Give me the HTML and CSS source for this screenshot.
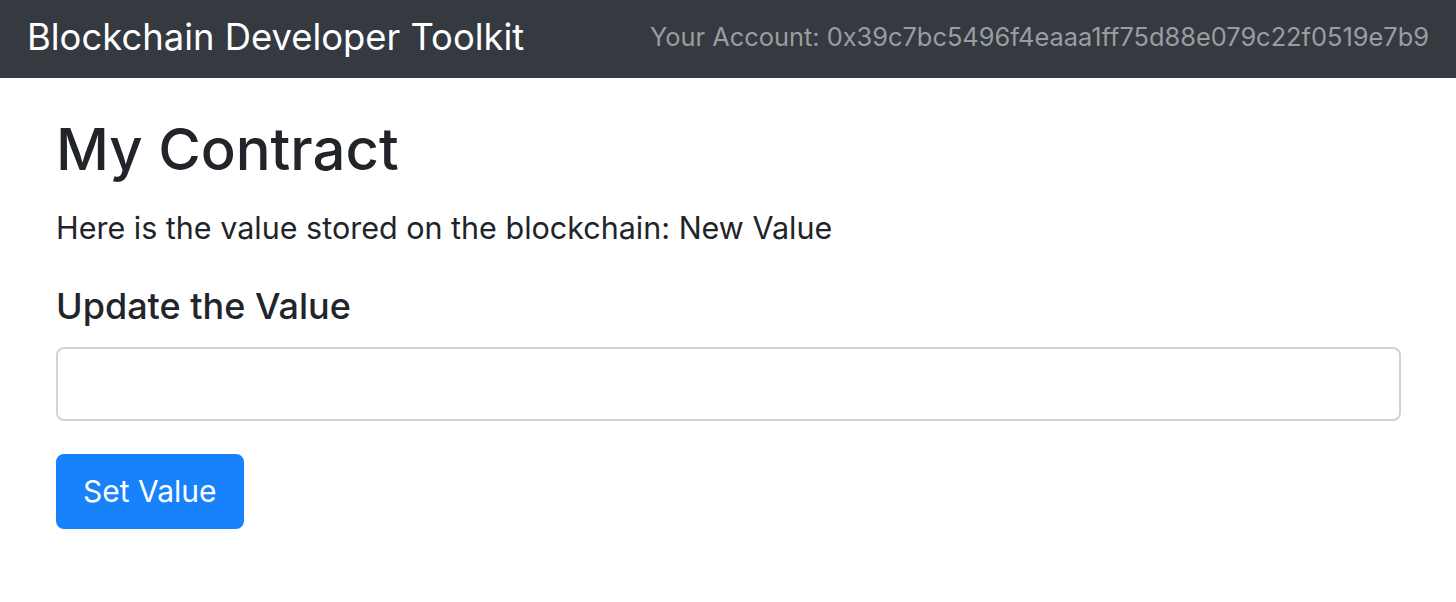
FILE: index.html
```html
<!DOCTYPE html>
<html lang="en">
<head>
<meta charset="utf-8">
<title>Blockchain Developer Toolkit</title>
<link rel="stylesheet" href="styles.css">
</head>
<body>
<nav class="navbar">
  <a class="brand" href="#">Blockchain Developer Toolkit</a>
  <span class="account">Your Account: 0x39c7bc5496f4eaaa1ff75d88e079c22f0519e7b9</span>
</nav>
<main class="content">
  <h1 class="title">My Contract</h1>
  <p class="stored">Here is the value stored on the blockchain: New Value</p>
  <h5 class="subtitle">Update the Value</h5>
  <form class="form">
    <input class="field" type="text">
    <button class="btn" type="button">Set Value</button>
  </form>
</main>
</body>
</html>
```
FILE: styles.css
```css
* { box-sizing: border-box; }
html, body { margin: 0; padding: 0; }
body {
  font-family: Inter, "Noto Sans", "Liberation Sans", sans-serif;
  color: #212529;
  background: #fff;
}
.navbar {
  height: 78px;
  background: #343a40;
  display: flex;
  align-items: center;
  justify-content: space-between;
  padding: 0 27px 4px 27px;
}
.brand {
  color: #fff;
  text-decoration: none;
  font-size: 36.4px;
  line-height: 54px;
}
.account {
  color: #9a9da0;
  font-size: 25.4px;
  line-height: 40px;
}
.content {
  padding: 0 55px 0 56px;
}
.title {
  font-size: 58px;
  font-weight: 500;
  line-height: 72px;
  margin: 35px 0 20px;
}
.stored {
  font-size: 30.5px;
  line-height: 45px;
  margin: 0 0 36px;
}
.subtitle {
  font-size: 36px;
  font-weight: 500;
  line-height: 41px;
  margin: 0 0 20px;
}
.form {
  display: flex;
  flex-direction: column;
  align-items: flex-start;
  gap: 33px;
}
.field {
  width: 100%;
  height: 74px;
  border: 2px solid #ced4da;
  border-radius: 8px;
  font: inherit;
  font-size: 30px;
  padding: 0 24px;
  outline: none;
}
.btn {
  font-family: inherit;
  font-size: 30px;
  line-height: 45px;
  color: #fff;
  background: #1782fb;
  border: 2px solid #1782fb;
  border-radius: 8px;
  padding: 13px 25px;
  cursor: pointer;
}
```
